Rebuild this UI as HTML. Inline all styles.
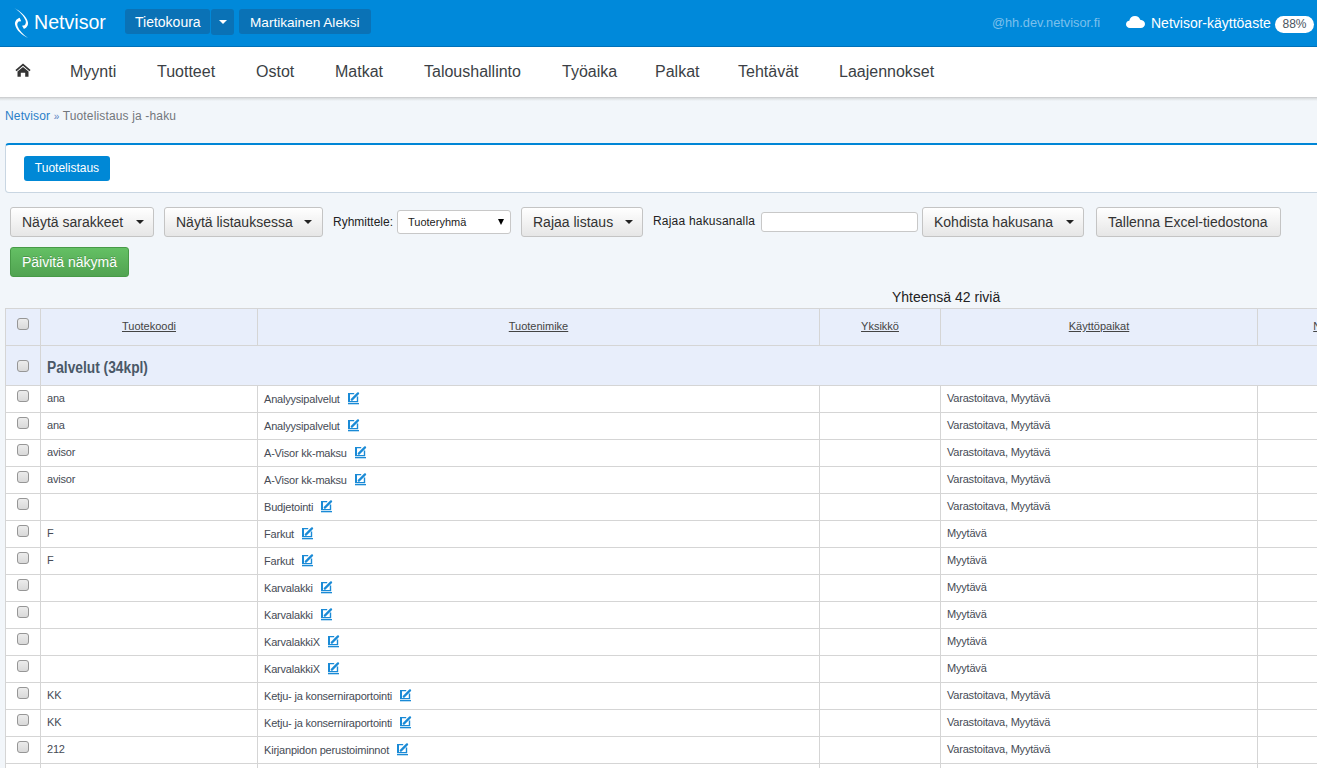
<!DOCTYPE html>
<html><head><meta charset="utf-8">
<style>
*{box-sizing:border-box;margin:0;padding:0}
html,body{width:1317px;height:768px;overflow:hidden}
body{background:#f2f6fa;font-family:"Liberation Sans",sans-serif;position:relative;color:#333}
.abs{position:absolute;white-space:nowrap}
#hdr{position:absolute;left:0;top:0;width:1317px;height:47px;background:#0089da;border-bottom:1px solid #0071b9}
.hbtn{position:absolute;top:9px;height:25px;background:#0a72b6;border-radius:3px;color:#fff;font-size:14px;line-height:27px}
#nav{position:absolute;left:0;top:47px;width:1317px;height:50px;background:#fff}
#navsh{position:absolute;left:0;top:97px;width:1317px;height:4px;background:linear-gradient(#c6c7c9,#dcdfe1 35%,#f2f6fa)}
.ni{position:absolute;top:62px;font-size:16px;color:#3b3f45;line-height:20px}
#crumb{left:5px;top:109px;font-size:12px;letter-spacing:0.15px;color:#72777c;line-height:14px}
#crumb a{color:#2a7fc8;text-decoration:none}
#panel{position:absolute;left:5px;top:143px;width:1330px;height:50px;background:#fff;border:1px solid #c9d6e2;border-top:2px solid #0086d6;border-radius:4px}
#tlbtn{position:absolute;left:24px;top:156px;width:86px;height:25px;background:#0088d6;border-radius:3px;color:#fff;font-size:12px;line-height:25px;text-align:center}
.btn{position:absolute;top:207px;height:30px;border:1px solid #c4c4c4;border-radius:3px;background:linear-gradient(#fff,#e6e6e6);font-size:14px;color:#333;line-height:28px;padding-left:11px}
.caret{position:absolute;top:12px;width:0;height:0;border-left:4px solid transparent;border-right:4px solid transparent;border-top:4px solid #222}
.lbl{position:absolute;font-size:12px;color:#222;line-height:14px}
#green{position:absolute;left:10px;top:247px;width:119px;height:30px;border:1px solid #479a47;border-radius:3px;background:linear-gradient(#64c064,#51a351);color:#fff;text-shadow:0 -1px 0 rgba(0,0,0,.2);font-size:14px;line-height:28px;padding-left:11px}
#tbl{position:absolute;left:5px;top:308px;border-collapse:collapse;table-layout:fixed;width:1397px}
#tbl td,#tbl th{border:1px solid #d5d5d5;padding:0;overflow:hidden;white-space:nowrap}
#tbl th{background:#e8eefb;height:37px;font-weight:normal;font-size:11px;color:#4a4a4a;padding-bottom:2px}
#tbl th a{color:#444;text-decoration:underline}
#tbl tr.grp td{background:#e8eefb;height:40px}
#tbl tr.row td{background:#fff;height:27px;font-size:11px;color:#464b55;padding-left:6px;letter-spacing:-0.2px;padding-bottom:2px}
#tbl td.cb,#tbl th.cb{padding-left:0 !important;vertical-align:top}
#tbl th.cb .chk{margin-top:9px}
#tbl tr.grp td.cb .chk{margin-top:14px}
#tbl tr.row td.cb .chk{margin-top:4px}
.chk{display:block;margin:0 auto;width:12px;height:12px;border:1px solid #969696;border-radius:3px;background:linear-gradient(#ececec,#d9d9d9)}
.ed{display:inline-block;vertical-align:-2px;margin-left:8px}
</style></head><body>
<div id="hdr"></div>
<!-- logo -->
<svg class="abs" style="left:10px;top:5px" width="24" height="36" viewBox="0 0 24 36">
  <path d="M4.2 3 C10 6 16.5 11 17.9 17 C18.6 20.5 16.5 22.8 13.8 24 L13.6 23.3 L12 20.8 L14.6 20.2 C15.8 19 16.2 17.5 15.6 15.6 C14 11 9.5 6.5 4.2 3Z" fill="#fff"/>
  <path d="M18 33 C12 30 6.3 25.5 5.1 19.8 C4.5 16.5 6.5 14 9.6 12.8 L9.9 13.3 L11.2 16.2 L8.6 16.6 C7.3 17.8 7 19.4 7.6 21.3 C9 25.5 13 29.5 18 33Z" fill="#fff"/>
</svg>
<div class="abs" style="left:34px;top:11px;font-size:19.6px;color:#fff;line-height:22px">Netvisor</div>
<div class="hbtn" style="left:125px;width:85px;padding-left:10px">Tietokoura</div>
<div class="hbtn" style="left:211px;width:23px;height:26px"><span class="caret" style="left:8px;top:11px;border-top-color:#fff"></span></div>
<div class="hbtn" style="left:239px;width:132px;padding-left:11px;font-size:13.6px">Martikainen Aleksi</div>
<div class="abs" style="left:992px;top:15px;font-size:12.8px;color:#7cc0ec;line-height:16px">@hh.dev.netvisor.fi</div>
<svg class="abs" style="left:1126px;top:15px" width="19" height="13" viewBox="0 0 19 13"><path d="M4 13 C1.5 13 0 11.3 0 9.3 C0 7.3 1.5 6 3.3 5.8 C3.8 3 6 1 9 1 C11.6 1 13.6 2.6 14.2 4.8 C16.8 4.9 19 6.7 19 9 C19 11.3 17.2 13 14.8 13Z" fill="#fff"/></svg>
<div class="abs" style="left:1151px;top:15px;font-size:14px;color:#fff;line-height:16px">Netvisor-käyttöaste</div>
<div class="abs" style="left:1275px;top:16px;width:39px;height:17px;border-radius:9px;background:#fff;color:#4a5560;font-size:12px;line-height:17px;text-align:center">88%</div>

<div id="nav"></div>
<div id="navsh"></div>
<svg class="abs" style="left:14.5px;top:63px" width="16" height="14" viewBox="0 0 16 14"><path d="M8 0.6 L15.6 7.1 L14.4 8.2 L8 2.7 L1.6 8.2 L0.4 7.1Z M2.5 8.4 L8 3.9 L13.5 8.4 V13.8 H10.2 V9.7 H5.8 V13.8 H2.5Z" fill="#333"/></svg>
<div class="ni" style="left:70px">Myynti</div>
<div class="ni" style="left:157px">Tuotteet</div>
<div class="ni" style="left:256px">Ostot</div>
<div class="ni" style="left:335px">Matkat</div>
<div class="ni" style="left:424px">Taloushallinto</div>
<div class="ni" style="left:562px">Työaika</div>
<div class="ni" style="left:655px">Palkat</div>
<div class="ni" style="left:738px">Tehtävät</div>
<div class="ni" style="left:839px">Laajennokset</div>

<div id="crumb" class="abs"><a>Netvisor</a> <span style="font-size:10px;color:#5a7fc0">»</span> Tuotelistaus ja -haku</div>
<div id="panel"></div>
<div id="tlbtn">Tuotelistaus</div>

<div class="btn" style="left:10px;width:144px">Näytä sarakkeet<span class="caret" style="left:125px"></span></div>
<div class="btn" style="left:164px;width:159px">Näytä listauksessa<span class="caret" style="left:139px"></span></div>
<div class="lbl" style="left:333px;top:215px">Ryhmittele:</div>
<div class="abs" style="left:397px;top:210px;width:114px;height:24px;background:#fff;border:1px solid #c8c8c8;border-radius:3px;font-size:11px;color:#222;line-height:22px;padding-left:10px">Tuoteryhmä<span style="position:absolute;left:100px;top:8px;width:0;height:0;border-left:3px solid transparent;border-right:3px solid transparent;border-top:6px solid #000"></span></div>
<div class="btn" style="left:521px;width:122px">Rajaa listaus<span class="caret" style="left:103px"></span></div>
<div class="lbl" style="left:653px;top:214px;letter-spacing:0.2px">Rajaa hakusanalla</div>
<div class="abs" style="left:761px;top:212px;width:157px;height:20px;background:#fff;border:1px solid #c8c8c8;border-radius:3px"></div>
<div class="btn" style="left:922px;width:162px">Kohdista hakusana<span class="caret" style="left:143px"></span></div>
<div class="btn" style="left:1096px;width:185px">Tallenna Excel-tiedostona</div>
<div id="green">Päivitä näkymä</div>
<div class="abs" style="left:892px;top:289px;font-size:14px;color:#222;line-height:16px">Yhteensä 42 riviä</div>

<table id="tbl">
<colgroup><col style="width:35px"><col style="width:217px"><col style="width:562px"><col style="width:121px"><col style="width:317px"><col style="width:145px"></colgroup>
<tr><th class="cb"><span class="chk"></span></th><th><a>Tuotekoodi</a></th><th><a>Tuotenimike</a></th><th><a>Yksikkö</a></th><th><a>Käyttöpaikat</a></th><th><a>Nimike</a></th></tr>
<tr class="grp"><td class="cb"><span class="chk"></span></td><td colspan="5" style="padding-left:6px;padding-top:4px"><span style="display:inline-block;font-size:16px;font-weight:bold;color:#4a5867;transform:scaleX(0.86);transform-origin:0 0">Palvelut (34kpl)</span></td></tr>
<tr class="row"><td class="cb"><span class="chk"></span></td><td>ana</td><td>Analyysipalvelut<svg class="ed" width="12" height="13" viewBox="0 0 12 13"><path d="M0 1 H6.2 V2.3 H2 V9 H8.8 V4.5 H10.2 V10.3 H0Z" fill="#1a8ad6"/><rect x="0" y="11" width="11" height="1.3" fill="#1a8ad6"/><path d="M3.8 7.6 L10 1.4" stroke="#1a8ad6" stroke-width="2.2" stroke-linecap="round"/></svg></td><td></td><td>Varastoitava, Myytävä</td><td></td></tr>
<tr class="row"><td class="cb"><span class="chk"></span></td><td>ana</td><td>Analyysipalvelut<svg class="ed" width="12" height="13" viewBox="0 0 12 13"><path d="M0 1 H6.2 V2.3 H2 V9 H8.8 V4.5 H10.2 V10.3 H0Z" fill="#1a8ad6"/><rect x="0" y="11" width="11" height="1.3" fill="#1a8ad6"/><path d="M3.8 7.6 L10 1.4" stroke="#1a8ad6" stroke-width="2.2" stroke-linecap="round"/></svg></td><td></td><td>Varastoitava, Myytävä</td><td></td></tr>
<tr class="row"><td class="cb"><span class="chk"></span></td><td>avisor</td><td>A-Visor kk-maksu<svg class="ed" width="12" height="13" viewBox="0 0 12 13"><path d="M0 1 H6.2 V2.3 H2 V9 H8.8 V4.5 H10.2 V10.3 H0Z" fill="#1a8ad6"/><rect x="0" y="11" width="11" height="1.3" fill="#1a8ad6"/><path d="M3.8 7.6 L10 1.4" stroke="#1a8ad6" stroke-width="2.2" stroke-linecap="round"/></svg></td><td></td><td>Varastoitava, Myytävä</td><td></td></tr>
<tr class="row"><td class="cb"><span class="chk"></span></td><td>avisor</td><td>A-Visor kk-maksu<svg class="ed" width="12" height="13" viewBox="0 0 12 13"><path d="M0 1 H6.2 V2.3 H2 V9 H8.8 V4.5 H10.2 V10.3 H0Z" fill="#1a8ad6"/><rect x="0" y="11" width="11" height="1.3" fill="#1a8ad6"/><path d="M3.8 7.6 L10 1.4" stroke="#1a8ad6" stroke-width="2.2" stroke-linecap="round"/></svg></td><td></td><td>Varastoitava, Myytävä</td><td></td></tr>
<tr class="row"><td class="cb"><span class="chk"></span></td><td></td><td>Budjetointi<svg class="ed" width="12" height="13" viewBox="0 0 12 13"><path d="M0 1 H6.2 V2.3 H2 V9 H8.8 V4.5 H10.2 V10.3 H0Z" fill="#1a8ad6"/><rect x="0" y="11" width="11" height="1.3" fill="#1a8ad6"/><path d="M3.8 7.6 L10 1.4" stroke="#1a8ad6" stroke-width="2.2" stroke-linecap="round"/></svg></td><td></td><td>Varastoitava, Myytävä</td><td></td></tr>
<tr class="row"><td class="cb"><span class="chk"></span></td><td>F</td><td>Farkut<svg class="ed" width="12" height="13" viewBox="0 0 12 13"><path d="M0 1 H6.2 V2.3 H2 V9 H8.8 V4.5 H10.2 V10.3 H0Z" fill="#1a8ad6"/><rect x="0" y="11" width="11" height="1.3" fill="#1a8ad6"/><path d="M3.8 7.6 L10 1.4" stroke="#1a8ad6" stroke-width="2.2" stroke-linecap="round"/></svg></td><td></td><td>Myytävä</td><td></td></tr>
<tr class="row"><td class="cb"><span class="chk"></span></td><td>F</td><td>Farkut<svg class="ed" width="12" height="13" viewBox="0 0 12 13"><path d="M0 1 H6.2 V2.3 H2 V9 H8.8 V4.5 H10.2 V10.3 H0Z" fill="#1a8ad6"/><rect x="0" y="11" width="11" height="1.3" fill="#1a8ad6"/><path d="M3.8 7.6 L10 1.4" stroke="#1a8ad6" stroke-width="2.2" stroke-linecap="round"/></svg></td><td></td><td>Myytävä</td><td></td></tr>
<tr class="row"><td class="cb"><span class="chk"></span></td><td></td><td>Karvalakki<svg class="ed" width="12" height="13" viewBox="0 0 12 13"><path d="M0 1 H6.2 V2.3 H2 V9 H8.8 V4.5 H10.2 V10.3 H0Z" fill="#1a8ad6"/><rect x="0" y="11" width="11" height="1.3" fill="#1a8ad6"/><path d="M3.8 7.6 L10 1.4" stroke="#1a8ad6" stroke-width="2.2" stroke-linecap="round"/></svg></td><td></td><td>Myytävä</td><td></td></tr>
<tr class="row"><td class="cb"><span class="chk"></span></td><td></td><td>Karvalakki<svg class="ed" width="12" height="13" viewBox="0 0 12 13"><path d="M0 1 H6.2 V2.3 H2 V9 H8.8 V4.5 H10.2 V10.3 H0Z" fill="#1a8ad6"/><rect x="0" y="11" width="11" height="1.3" fill="#1a8ad6"/><path d="M3.8 7.6 L10 1.4" stroke="#1a8ad6" stroke-width="2.2" stroke-linecap="round"/></svg></td><td></td><td>Myytävä</td><td></td></tr>
<tr class="row"><td class="cb"><span class="chk"></span></td><td></td><td>KarvalakkiX<svg class="ed" width="12" height="13" viewBox="0 0 12 13"><path d="M0 1 H6.2 V2.3 H2 V9 H8.8 V4.5 H10.2 V10.3 H0Z" fill="#1a8ad6"/><rect x="0" y="11" width="11" height="1.3" fill="#1a8ad6"/><path d="M3.8 7.6 L10 1.4" stroke="#1a8ad6" stroke-width="2.2" stroke-linecap="round"/></svg></td><td></td><td>Myytävä</td><td></td></tr>
<tr class="row"><td class="cb"><span class="chk"></span></td><td></td><td>KarvalakkiX<svg class="ed" width="12" height="13" viewBox="0 0 12 13"><path d="M0 1 H6.2 V2.3 H2 V9 H8.8 V4.5 H10.2 V10.3 H0Z" fill="#1a8ad6"/><rect x="0" y="11" width="11" height="1.3" fill="#1a8ad6"/><path d="M3.8 7.6 L10 1.4" stroke="#1a8ad6" stroke-width="2.2" stroke-linecap="round"/></svg></td><td></td><td>Myytävä</td><td></td></tr>
<tr class="row"><td class="cb"><span class="chk"></span></td><td>KK</td><td>Ketju- ja konserniraportointi<svg class="ed" width="12" height="13" viewBox="0 0 12 13"><path d="M0 1 H6.2 V2.3 H2 V9 H8.8 V4.5 H10.2 V10.3 H0Z" fill="#1a8ad6"/><rect x="0" y="11" width="11" height="1.3" fill="#1a8ad6"/><path d="M3.8 7.6 L10 1.4" stroke="#1a8ad6" stroke-width="2.2" stroke-linecap="round"/></svg></td><td></td><td>Varastoitava, Myytävä</td><td></td></tr>
<tr class="row"><td class="cb"><span class="chk"></span></td><td>KK</td><td>Ketju- ja konserniraportointi<svg class="ed" width="12" height="13" viewBox="0 0 12 13"><path d="M0 1 H6.2 V2.3 H2 V9 H8.8 V4.5 H10.2 V10.3 H0Z" fill="#1a8ad6"/><rect x="0" y="11" width="11" height="1.3" fill="#1a8ad6"/><path d="M3.8 7.6 L10 1.4" stroke="#1a8ad6" stroke-width="2.2" stroke-linecap="round"/></svg></td><td></td><td>Varastoitava, Myytävä</td><td></td></tr>
<tr class="row"><td class="cb"><span class="chk"></span></td><td>212</td><td>Kirjanpidon perustoiminnot<svg class="ed" width="12" height="13" viewBox="0 0 12 13"><path d="M0 1 H6.2 V2.3 H2 V9 H8.8 V4.5 H10.2 V10.3 H0Z" fill="#1a8ad6"/><rect x="0" y="11" width="11" height="1.3" fill="#1a8ad6"/><path d="M3.8 7.6 L10 1.4" stroke="#1a8ad6" stroke-width="2.2" stroke-linecap="round"/></svg></td><td></td><td>Varastoitava, Myytävä</td><td></td></tr>
<tr class="row"><td class="cb"><span class="chk"></span></td><td></td><td></td><td></td><td></td><td></td></tr>
</table>
</body></html>
